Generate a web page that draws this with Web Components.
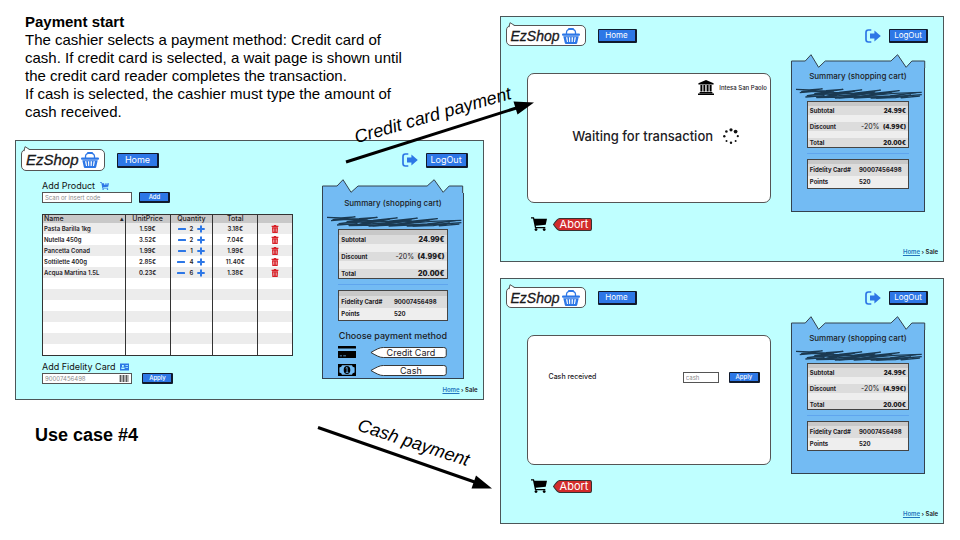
<!DOCTYPE html>
<html lang="en">
<head>
<meta charset="utf-8">
<meta name="viewport" content="width=device-width, initial-scale=1">
<title>EzShop – Payment start</title>
<style>
  html, body { margin: 0; background: #fff; color: #000; }
  body { font-family: "Liberation Sans", Arial, sans-serif; }
</style>
</head>
<body>
<ez-slide>
  <ez-notes slot="notes"></ez-notes>
  <ez-screen slot="sale" size="large">
    <ez-cart></ez-cart>
    <ez-receipt slot="aside" size="large"><ez-payment></ez-payment></ez-receipt>
  </ez-screen>
  <span slot="caption">Use case #4</span>
  <ez-screen slot="card">
    <ez-panel><ez-waiting></ez-waiting></ez-panel>
    <ez-receipt slot="aside"></ez-receipt>
  </ez-screen>
  <ez-screen slot="cash">
    <ez-panel><ez-cash-form></ez-cash-form></ez-panel>
    <ez-receipt slot="aside"></ez-receipt>
  </ez-screen>
</ez-slide>

<script>
const define = (name, html, setup) => {
  const template = document.createElement('template');
  template.innerHTML = html;
  customElements.define(name, class extends HTMLElement {
    constructor() {
      super();
      this.attachShadow({ mode: 'open' }).append(template.content.cloneNode(true));
    }
    connectedCallback() { if (setup) setup(this, this.shadowRoot); }
  });
};

const ICONS = {
  basket: ['0 0 18 16', '<path d="M4.5 7V4.5Q4.5 1.2 9 1.2T13.5 4.5V7" fill="none" stroke="currentColor" stroke-width="1.3"/><rect x="6" y="0" width="6" height="2" rx="1"/><rect x="0" y="5.6" width="18" height="2.2" rx="1"/><path fill-rule="evenodd" d="M1.3 8.2H16.7L15.2 15Q15 16 14 16H4Q3 16 2.8 15ZM4 9.3 5 14H6L5.4 9.3ZM6.9 9.3 7.2 14H8.2V9.3ZM9.6 9.3V14H10.7L11 9.3ZM12.5 9.3 12 14H13L13.9 9.3Z"/>'],
  logout: ['0 0 16 14', '<path d="M6.3 1H3.4Q1 1 1 3.4V10.6Q1 13 3.4 13H6.3" fill="none" stroke="currentColor" stroke-width="1.7"/><path d="M5 4.6H9.4V1.4L15.8 7 9.4 12.6V9.4H5Z"/>'],
  cart: ['0 0 16 14', '<path d="M0 .2H3L3.4 1.7H16L14.7 7.7 4.8 8.8 5.1 10H14.3V11.2H4L2 1.4H0Z"/><circle cx="5" cy="12.6" r="1.4"/><circle cx="13.2" cy="12.6" r="1.4"/>'],
  cartplus: ['0 0 10 9', '<path d="M0 .2H2L2.4 1.3H4.6V3H6V1.3H7.3V3H8.2V1.3H10L9.2 5.4 3.2 6 3.4 6.6H9V7.3H2.6L1.5 1H0Z"/><circle cx="3.4" cy="8.2" r=".8"/><circle cx="8.4" cy="8.2" r=".8"/>'],
  idcard: ['0 0 9 7', '<path fill-rule="evenodd" d="M0 0H9V7H0ZM2 1.4V3.2H3.8V1.4ZM1.3 4V5.4H4.6V4ZM5.5 1.8V2.6H8V1.8ZM5.5 3.8V4.6H8V3.8Z"/>'],
  barcode: ['0 0 10 8', '<path d="M0 0H1.6V8H0ZM2.2 0H3V8H2.2ZM3.6 0H5.4V8H3.6ZM6 0H6.6V8H6ZM7.2 0H8.4V8H7.2ZM9 0H10V8H9Z"/>'],
  minus: ['0 0 8 8', '<rect x="0" y="3" width="8" height="2" rx=".5"/>'],
  plus: ['0 0 8 8', '<path d="M3 .5H5V3H7.7V5H5V7.6H3V5H.3V3H3Z"/>'],
  trash: ['0 0 8 8', '<path fill-rule="evenodd" d="M.6.8H2.6L3 0H5L5.4.8H7.4V1.9H.6ZM1 2.3H7L6.7 8H1.3ZM2.5 3.5V6.8H3V3.5ZM3.8 3.5V6.8H4.2V3.5ZM5 3.5V6.8H5.5V3.5Z"/>'],
  creditcard: ['0 0 18 12', '<path fill-rule="evenodd" d="M0 0H17.4Q18 0 18 .6V2.4H0ZM0 5H18V11.4Q18 12 17.4 12H.6Q0 12 0 11.4ZM1.8 9.4V10.3H4V9.4ZM5.2 9.4V10.3H8V9.4Z"/>'],
  banknote: ['0 0 18 12', '<path fill-rule="evenodd" d="M0 0H18V12H0ZM4 1.3Q3.8 3 1.4 3.4V8.6Q3.8 9 4 10.7H14Q14.2 9 16.6 8.6V3.4Q14.2 3 14 1.3Z"/><ellipse cx="9" cy="6" rx="3.3" ry="4"/><path d="M7.7 4.2 9.1 3.4V8.2M7.8 8.4H10.4" stroke="#6fb7f2" fill="none" stroke-width=".9"/>'],
  bank: ['0 0 16 15', '<path d="M8 0 15.6 3.2V4.6H.4V3.2ZM1.6 12H14.4V13.2H1.6ZM0 13.6H16V15H0ZM2.4 5H4.4V11.6H2.4ZM5.4 5H7.3V11.6H5.4ZM8.6 5H10.6V11.6H8.6ZM11.6 5H13.6V11.6H11.6Z"/>'],
  spinner: ['0 0 16 16', '<circle cx="8" cy="1.8" r="1.6"/><circle cx="12.6" cy="3.6" r="1.9"/><circle cx="14.8" cy="8.2" r="1.1"/><circle cx="12.6" cy="13" r="1"/><circle cx="8" cy="14.8" r="1.2"/><circle cx="3.5" cy="13" r="1"/><circle cx="1.3" cy="8.2" r="1.2"/><circle cx="3.4" cy="3.5" r="1.3"/>']
};

customElements.define('ez-icon', class extends HTMLElement {
  connectedCallback() {
    if (this.shadowRoot) return;
    const [box, shape] = ICONS[this.getAttribute('name')];
    this.attachShadow({ mode: 'open' }).innerHTML =
      `<style>:host{display:block;flex:none}svg{display:block;width:100%;height:100%}</style>
       <svg viewBox="${box}" fill="currentColor" aria-hidden="true">${shape}</svg>`;
  }
});

define('ez-button', `
<style>
  :host { display: block; flex: none; }
  button { display: block; width: 100%; height: 100%; padding: 0; box-sizing: border-box; cursor: pointer;
    font: inherit; color: #fff; background: #2d77e6; text-align: center;
    border: 1px solid #111a2c; border-right-width: 2px; border-bottom-width: 2px; border-radius: 1px; }
</style>
<button type="button"><slot></slot></button>`);

define('ez-tag', `
<style>
  :host { display: block; --tag: #fff; }
  button { position: relative; display: block; width: 100%; height: 100%; padding: 0 0 0 4px; border: 0;
    background: none; color: inherit; font: inherit; text-align: center; cursor: pointer; }
  svg { position: absolute; inset: 0; width: 100%; height: 100%; }
  span { position: relative; }
</style>
<button type="button">
  <svg viewBox="0 0 40 12" preserveAspectRatio="none" aria-hidden="true">
    <path d="M.5 6Q2 4 4 2Q5.5.5 7 .5H38Q39.5.5 39.5 2.5V9.5Q39.5 11.5 38 11.5H7Q5.5 11.5 4 10Q2 8 .5 6Z" fill="var(--tag)" stroke="#333" vector-effect="non-scaling-stroke"/>
  </svg>
  <span><slot></slot></span>
</button>`);

define('ez-logo', `
<style>
  :host { position: relative; display: flex; align-items: center; justify-content: space-between; box-sizing: border-box;
    padding: 0 5px 0 4px; background: #fff; border: 1px solid #555; border-radius: 5px; }
  span { font-family: "Liberation Sans", Arial, sans-serif; font-style: italic; -webkit-text-stroke: 0.3px #111; }
  .tail { position: absolute; left: 0; top: -4px; width: 10px; height: 6px; }
  ez-icon { width: 18px; height: 16px; color: #2d77e6; }
</style>
<svg class="tail" viewBox="0 0 10 6" aria-hidden="true"><path d="M2 6 3 .7 8 4.3V6Z" fill="#fff"/><path d="M2 5.2 3 .7 8 3.7" fill="none" stroke="#555"/></svg>
<span>EzShop</span><ez-icon name="basket"></ez-icon>`);

define('ez-screen', `
<style>
  :host { display: grid; grid-template-rows: auto 1fr auto; box-sizing: border-box; min-height: 246px;
    background: #bfffff; border: 1px solid #4c5658; color: #1c2024; font: 9px/12px Inter, "Noto Sans", sans-serif;
    --row: 16px; --strip: 4px; --main: 244fr; --aside: 134fr; }
  :host([size=large]) { min-height: 260px; --row: 17px; --strip: 5px; --main: 251fr; --aside: 141fr; }
  header { display: flex; align-items: center; padding: 8px 15px 8px 5px; }
  ez-logo { width: 80px; height: 21px; font-size: 14px; margin-right: 12px; }
  ez-button { width: 39px; height: 14px; font-size: 8px; line-height: 10px; }
  header ez-icon { width: 16px; height: 14px; margin: 0 8px 0 auto; color: #2d77e6; }
  :host([size=large]) ez-logo { width: 84px; height: 22px; font-size: 15px; }
  :host([size=large]) ez-button { width: 42px; height: 15px; font-size: 9px; }
  .body { display: grid; grid-template-columns: var(--main) var(--aside); gap: 20px; padding: 0 18px 0 26px; align-items: start; }
  :host([size=large]) .body { gap: 29px; padding-right: 19px; }
  nav { text-align: right; padding: 0 5px 4px; font-size: 6px; line-height: 10px; font-weight: 600; }
  a { color: #2275bd; }
</style>
<header><ez-logo></ez-logo><ez-button>Home</ez-button><ez-icon name="logout"></ez-icon><ez-button>LogOut</ez-button></header>
<div class="body"><main><slot></slot></main><aside><slot name="aside"></slot></aside></div>
<nav aria-label="Breadcrumb"><a href="#home">Home</a> › Sale</nav>`);

const FIELD = `
  input { font: inherit; font-size: 6px; line-height: 8px; box-sizing: border-box; height: 11px; padding: 0 2px; margin: 0; width: 100%;
    background: #fff; border: 1px solid #555; border-radius: 0; outline: 0; color: #555; }
  input::placeholder { color: #8b8b8b; opacity: 1; }
  ez-button { width: 31px; height: 11px; font-size: 6px; line-height: 8px; font-weight: 500; }`;

define('ez-cart', `
<style>
  :host { display: block; }
  ${FIELD}
  label { display: flex; align-items: center; gap: 5px; line-height: 13px; color: #111; }
  label ez-icon { width: 9px; height: 8px; color: #2d77e6; }
  .line { display: flex; gap: 7px; }
  .line.wide { gap: 10px; }
  .field { position: relative; flex: 0 0 36%; display: flex; }
  .field ez-icon { position: absolute; right: 3px; top: 2px; width: 10px; height: 7px; color: #555; }
  .line input { padding-right: 14px; }
  table { width: 100%; table-layout: fixed; border-collapse: collapse; margin: 11px 0 4px; border: 1px solid #333; background: #fff;
    font-size: 6px; line-height: 8px; font-weight: 600; }
  th, td { padding: 0 1px; height: 11px; border-left: 1px solid #333; border-right: 1px solid #333; text-align: center; }
  th { height: 8px; font-size: 7px; font-weight: 500; background: #c8c8c8; }
  th:first-child, td:first-child { text-align: left; white-space: nowrap; }
  tbody tr:nth-child(odd) { background: #ececec; }
  .head { display: flex; justify-content: space-between; }
  .qty { display: flex; align-items: center; justify-content: center; gap: 4px; }
  td button { display: block; padding: 0; border: 0; background: none; color: #2d77e6; cursor: pointer; }
  td button ez-icon { width: 8px; height: 8px; }
  td .bin { margin: 0 auto; color: #d81f26; }
</style>
<label for="code">Add Product <ez-icon name="cartplus"></ez-icon></label>
<div class="line"><div class="field"><input id="code" type="text" placeholder="Scan or insert code"></div><ez-button>Add</ez-button></div>
<table>
  <colgroup><col style="width:33%"><col style="width:18%"><col style="width:17%"><col style="width:18%"><col style="width:14%"></colgroup>
  <thead><tr><th scope="col"><span class="head"><span>Name</span><span>▴</span></span></th><th scope="col">UnitPrice</th><th scope="col">Quantity</th><th scope="col">Total</th><th></th></tr></thead>
  <tbody></tbody>
</table>
<label for="card">Add Fidelity Card <ez-icon name="idcard"></ez-icon></label>
<div class="line wide"><div class="field"><input id="card" type="text" placeholder="90007456498"><ez-icon name="barcode"></ez-icon></div><ez-button>Apply</ez-button></div>`,
(host, root) => {
  const items = [
    ['Pasta Barilla 1kg', '1.59€', 2, '3.18€'],
    ['Nutella 450g', '3.52€', 2, '7.04€'],
    ['Pancetta Conad', '1.99€', 1, '1.99€'],
    ['Sottilette 400g', '2.85€', 4, '11.40€'],
    ['Acqua Martina 1.5L', '0.23€', 6, '1.38€']
  ];
  root.querySelector('tbody').innerHTML = items.map(([name, price, n, total]) => `
    <tr><td>${name}</td><td>${price}</td>
    <td><div class="qty"><button type="button" aria-label="Remove one"><ez-icon name="minus"></ez-icon></button><span>${n}</span><button type="button" aria-label="Add one"><ez-icon name="plus"></ez-icon></button></div></td>
    <td>${total}</td>
    <td><button type="button" class="bin" aria-label="Delete"><ez-icon name="trash"></ez-icon></button></td></tr>`).join('')
    + '<tr><td></td><td></td><td></td><td></td><td></td></tr>'.repeat(7);
});

define('ez-receipt', `
<style>
  :host { display: block; }
  svg { display: block; width: 100%; overflow: visible; }
  .edge { height: 14px; }
  .paper { box-sizing: border-box; background: #73bbf3; border: 1px solid #34424e; border-top: 0; padding: 1px 15px 2px; min-height: 144px; }
  h2 { margin: 0 -12px 5px; font-size: 8px; line-height: 14px; font-weight: 500; text-align: center; white-space: nowrap; }
  :host([size=large]) .paper { padding-top: 3px; }
  :host([size=large]) h2 { margin-bottom: 6px; }
  :host([size=large]) td:last-child b { font-size: 7px; }
  .scribble { width: 124%; height: 11px; margin: 0 0 2px -11px; }
  table { width: 100%; border-spacing: 0; border: 1px solid #444; font-size: 6px; line-height: 9px; font-weight: 700; }
  td { padding: 0 2px; vertical-align: top; white-space: nowrap; }
  .sums { border-top: 0; background: repeating-linear-gradient(#dcdcdc 0 9px, #eee 9px var(--row)); }
  .top { height: var(--strip); background: #c8c8c8; border: 1px solid #444; border-bottom: 0; }
  .sums td { height: var(--row); }
  .sums tr:last-child td { height: 9px; }
  .sums td:last-child { text-align: right; }
  .sums i { font-style: normal; font-weight: 400; font-size: 7px; margin-right: 2px; }
  hr { border: 0; border-top: 1px solid #5fa5ee; margin: 5px 0; }
  .id { border-top: 0; background: linear-gradient(#dcdcdc 0 12px, #eee 12px); }
  .id td { height: 12px; line-height: 12px; }
</style>
<svg class="edge" viewBox="0 0 141 14" preserveAspectRatio="none" aria-hidden="true">
  <path d="M.5 14V7H15L21 .7 29 13.3 36 7H105L112 .7 121 13.3 127 7H140.5V14" fill="#73bbf3" stroke="#34424e" vector-effect="non-scaling-stroke"/>
</svg>
<div class="paper">
  <h2>Summary (shopping cart)</h2>
  <svg class="scribble" viewBox="0 0 135 11" preserveAspectRatio="none" aria-hidden="true">
    <g fill="none" stroke="#1b3a52" stroke-width="1.3" stroke-linejoin="round">
      <path d="M0 1.4 14 2 28 .8 6 3.6 32 2.6 50 1.4 20 5.6 46 4.4 70 1.8 34 6.8 62 5.2 90 2.2 52 7.8 80 5.6 110 2.6 70 8.4 104 5.4 134 4.4"/>
      <path d="M4 4.6 20 3.4 40 3.8 12 7.6 40 5.6 62 3.4 28 9 58 7 84 4 46 9.8 78 7.4 102 4.2 62 10.2 100 8 128 4.6 86 10.2 116 8 134 6.6"/>
      <path d="M10 9 30 7.6 22 9.6 52 9 42 10.2 74 8.6 92 9.4 80 10 106 9.6 122 6.8 112 9.8 132 8"/>
    </g>
  </svg>
  <div class="top"></div>
  <table class="sums">
    <tr><td>Subtotal</td><td><b>24.99€</b></td></tr>
    <tr><td>Discount</td><td><i>-20%</i> <b>(4.99€)</b></td></tr>
    <tr><td>Total</td><td><b>20.00€</b></td></tr>
  </table>
  <hr>
  <div class="top"></div>
  <table class="id">
    <tr><td>Fidelity Card#</td><td>90007456498</td></tr>
    <tr><td>Points</td><td>520</td></tr>
  </table>
  <slot></slot>
</div>`);

define('ez-payment', `
<style>
  :host { display: block; padding-top: 8px; }
  h3 { margin: 0 -8px 4px; font-size: 9px; line-height: 13px; font-weight: 500; text-align: center; white-space: nowrap; }
  .opt { display: flex; align-items: center; gap: 14px; margin-bottom: 6px; }
  .opt:last-child { margin-bottom: 0; }
  ez-icon { width: 18px; height: 12px; color: #000; }
  ez-tag { flex: 1; height: 11px; font-size: 9px; line-height: 11px; }
</style>
<h3>Choose payment method</h3>
<div class="opt"><ez-icon name="creditcard"></ez-icon><ez-tag>Credit Card</ez-tag></div>
<div class="opt"><ez-icon name="banknote"></ez-icon><ez-tag>Cash</ez-tag></div>`);

define('ez-panel', `
<style>
  :host { display: block; padding-top: 19px; }
  section { box-sizing: border-box; min-height: 130px; background: #fff; border: 1px solid #555; border-radius: 7px; }
  .actions { display: flex; align-items: center; gap: 6px; padding: 14px 4px 0; }
  ez-icon { width: 16px; height: 14px; color: #000; }
  ez-tag { width: 39px; height: 13px; font-size: 11px; line-height: 13px; color: #fff; --tag: #d22b2b; }
</style>
<section><slot></slot></section>
<div class="actions"><ez-icon name="cart"></ez-icon><ez-tag>Abort</ez-tag></div>`);

define('ez-waiting', `
<style>
  :host { display: block; padding: 6px 3px; }
  .bank { display: flex; align-items: center; justify-content: flex-end; gap: 5px; font-size: 6px; line-height: 8px; font-weight: 500; }
  .bank ez-icon { width: 16px; height: 15px; color: #000; }
  .wait { display: flex; align-items: center; justify-content: center; gap: 10px; padding: 32px 0 0 14px; font-size: 13px; line-height: 18px; font-weight: 500; }
  .wait ez-icon { width: 16px; height: 16px; color: #111; }
</style>
<div class="bank"><ez-icon name="bank"></ez-icon><span>Intesa San Paolo</span></div>
<div class="wait" role="status"><span>Waiting for transaction</span><ez-icon name="spinner"></ez-icon></div>`);

define('ez-cash-form', `
<style>
  :host { display: flex; align-items: center; padding: 35px 10px 0 21px; }
  ${FIELD}
  label { flex: 1; font-size: 7px; line-height: 12px; font-weight: 500; }
  input { width: 36px; margin-right: 10px; }
</style>
<label for="amount">Cash received</label><input id="amount" type="text" placeholder="cash"><ez-button>Apply</ez-button>`);

define('ez-notes', `
<style>
  :host { display: block; padding: 0 80px 0 10px; font-size: 15px; line-height: 18px; }
  h1, p { margin: 0; font-size: inherit; }
</style>
<h1>Payment start</h1>
<p>The cashier selects a payment method: Credit card of cash. If credit card is selected, a wait page is shown until the credit card reader completes the transaction.</p>
<p>If cash is selected, the cashier must type the amount of cash received.</p>`);

define('ez-slide', `
<style>
  :host { position: relative; display: grid; grid-template-columns: 468fr 444fr; gap: 16px; padding: 13px 16px 16px 15px; }
  .left, .right { display: flex; flex-direction: column; }
  .right { gap: 16px; padding-top: 3px; }
  .notes { padding-bottom: 19px; }
  .caption { margin: 0; padding: 23px 20px 0; font-size: 18px; line-height: 24px; font-weight: 700; }
  .arrows { position: absolute; left: 0; top: 0; width: 960px; height: 540px; pointer-events: none; }
  .flow { position: absolute; transform-origin: 0 100%; font-size: 18px; line-height: 22px; font-style: italic; white-space: nowrap; }
  .card { left: 358px; top: 126px; transform: rotate(-16deg); }
  .cash { left: 355px; top: 413px; transform: rotate(18deg); }
</style>
<div class="left">
  <div class="notes"><slot name="notes"></slot></div>
  <slot name="sale"></slot>
  <h2 class="caption"><slot name="caption"></slot></h2>
</div>
<div class="right"><slot name="card"></slot><slot name="cash"></slot></div>
<svg class="arrows" viewBox="0 0 960 540" aria-hidden="true">
  <g stroke="#000" stroke-width="3"><path d="M346 162 518 107.500"/><path d="M318 427.500 476 482.500"/></g>
  <path d="M534 102.500 517.500 114.500 513.500 101.500ZM492 488.500 471.500 488.500 476 475.500Z"/>
</svg>
<span class="flow card">Credit card payment</span>
<span class="flow cash">Cash payment</span>`);
</script>
</body>
</html>
